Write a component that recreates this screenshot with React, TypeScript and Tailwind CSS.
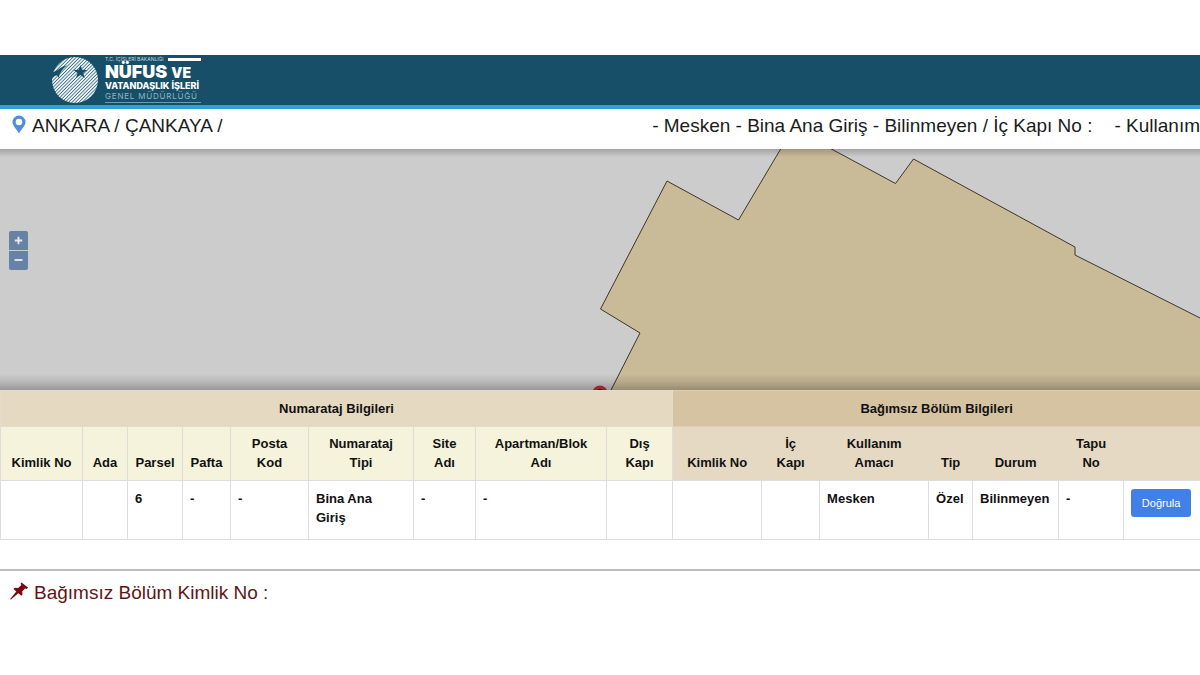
import React from 'react';

type Column = { label: string; width: string; group: 'address' | 'unit' };

const columns: Column[] = [
  { label: 'Kimlik No', width: 'w-[82px]', group: 'address' },
  { label: 'Ada', width: 'w-[45px]', group: 'address' },
  { label: 'Parsel', width: 'w-[55px]', group: 'address' },
  { label: 'Pafta', width: 'w-[48px]', group: 'address' },
  { label: 'Posta\nKod', width: 'w-[78px]', group: 'address' },
  { label: 'Numarataj\nTipi', width: 'w-[105px]', group: 'address' },
  { label: 'Site\nAdı', width: 'w-[62px]', group: 'address' },
  { label: 'Apartman/Blok\nAdı', width: 'w-[131px]', group: 'address' },
  { label: 'Dış\nKapı', width: 'w-[66px]', group: 'address' },
  { label: 'Kimlik No', width: 'w-[89px]', group: 'unit' },
  { label: 'İç\nKapı', width: 'w-[58px]', group: 'unit' },
  { label: 'Kullanım\nAmacı', width: 'w-[109px]', group: 'unit' },
  { label: 'Tip', width: 'w-[44px]', group: 'unit' },
  { label: 'Durum', width: 'w-[86px]', group: 'unit' },
  { label: 'Tapu\nNo', width: 'w-[65px]', group: 'unit' },
  { label: '', width: 'w-[77px]', group: 'unit' },
];

const row = ['', '', '6', '-', '-', 'Bina Ana\nGiriş', '-', '-', '', '', '', 'Mesken', 'Özel', 'Bilinmeyen', '-'];

function Logo() {
  return (
    <div className="flex items-start gap-1.5 text-white">
      <svg viewBox="0 0 48 48" className="mt-px size-12" aria-hidden="true">
        <defs>
          <pattern id="stripes" width="2.4" height="2.4" patternUnits="userSpaceOnUse" patternTransform="rotate(-45)">
            <rect width="2.4" height="1.75" fill="#eaf2f5" />
          </pattern>
        </defs>
        <circle cx="24" cy="24" r="23" fill="url(#stripes)" />
        <path d="M-1 16 2 16C7 15 10 10 16 9.500 12 12 9 16 7.500 22L6.500 19.500C4.500 19 2.500 20 1 23L-2 23Z" fill="#174f69" />
        <path d="m29.500 9 1.700 4.700 5 .2-4 3.100 1.400 4.900-4.200-2.800-4.200 2.900 1.300-4.900-4-3.100 5.100-.3Z" fill="#174f69" />
      </svg>
      <div className="flex w-24 flex-col font-['Inter',sans-serif]">
        <div className="flex h-2 items-center justify-between gap-1">
          <span className="text-[5px] leading-[8px] whitespace-nowrap text-[#c3d6de]">T.C. İÇİŞLERİ BAKANLIĞI</span>
          <span className="h-[3px] grow bg-white" />
        </div>
        <div className="flex h-[17px] items-baseline gap-1 leading-[17px] font-black whitespace-nowrap">
          <span className="text-[18px]">NÜFUS</span>
          <span className="text-[14px]">VE</span>
        </div>
        <span className="text-[9px] leading-[11px] font-extrabold whitespace-nowrap">VATANDAŞLIK İŞLERİ</span>
        <span className="border-b border-[#6d9aad] text-[8px] leading-[11px] tracking-widest whitespace-nowrap text-[#8fb6c5]">
          GENEL MÜDÜRLÜĞÜ
        </span>
      </div>
    </div>
  );
}

function MapPin() {
  return (
    <svg viewBox="0 0 14 19" className="h-[19px] w-3.5 shrink-0" aria-hidden="true">
      <path
        d="M7 .5A6.500 6.500 0 0 0 .5 7c0 4 5 8 6.500 11.500C8.500 15 13.500 11 13.500 7A6.500 6.500 0 0 0 7 .5ZM7 3.700a3.300 3.300 0 1 1 0 6.600 3.300 3.300 0 0 1 0-6.600Z"
        fill="#4f8edc"
        fillRule="evenodd"
      />
    </svg>
  );
}

function PushPin() {
  return (
    <svg viewBox="0 0 18 18" className="size-[18px] shrink-0" aria-hidden="true">
      <path
        d="M11.500.5 18 5.500 16.800 6.900 15 6.500 12.200 9.500 12.500 12.500 11.300 13.700 8.300 11.200 1 17.500.3 17.500.4 16.800 6.300 9.500 3.500 7 4.700 5.700 8.200 6 11.300 3 10.600 1.500Z"
        fill="#7a0c10"
      />
    </svg>
  );
}

function ParcelMap() {
  return (
    <section className="relative h-[241px] overflow-hidden bg-[#cccccc]" aria-label="Harita">
      <svg viewBox="0 0 1200 241" preserveAspectRatio="xMidYMid slice" className="h-full w-full" aria-hidden="true">
        <circle cx="600" cy="244" r="7.500" fill="#b5383b" />
        <circle cx="600" cy="243" r="3" fill="#64191c" />
        <path
          d="M609 245 640 184 600.500 160 667 32 738.500 71 786-9 824-4 895.500 34.500 913.500 10 1075 98V106L1210 174V260H601Z"
          fill="#cabb98"
          stroke="#3d3727"
          strokeWidth="1"
        />
      </svg>
      <div className="absolute inset-x-0 top-0 h-2 bg-linear-to-b from-black/20 to-transparent" />
      <div className="absolute inset-x-0 bottom-0 h-4 bg-linear-to-t from-black/25 via-black/10 to-transparent" />
      <div className="absolute top-[82px] left-[9px] flex flex-col gap-px">
        <button aria-label="Yakınlaştır" className="flex size-[19px] items-center justify-center rounded-t-xs bg-[#6682a6]">
          <svg viewBox="0 0 9 9" className="size-[9px]" aria-hidden="true">
            <path d="M4.500.8V8.200M.8 4.500H8.200" stroke="#e6ebf1" strokeWidth="1.800" />
          </svg>
        </button>
        <button aria-label="Uzaklaştır" className="flex size-[19px] items-center justify-center rounded-b-xs bg-[#6682a6]">
          <svg viewBox="0 0 9 9" className="size-[9px]" aria-hidden="true">
            <path d="M.5 4H8.500" stroke="#e6ebf1" strokeWidth="1.800" />
          </svg>
        </button>
      </div>
    </section>
  );
}

function UnitTable() {
  return (
    <table className="w-full table-fixed border-collapse text-[13px] leading-[19px] font-bold text-[#111]">
      <colgroup>
        {columns.map((column, index) => (
          <col key={index} className={column.width} />
        ))}
      </colgroup>
      <thead>
        <tr>
          <th colSpan={9} scope="colgroup" className="border border-[#e3dccd] bg-[#e6d9c2] p-2">
            Numarataj Bilgileri
          </th>
          <th colSpan={7} scope="colgroup" className="border border-[#dccfb6] bg-[#d6c3a1] p-2">
            Bağımsız Bölüm Bilgileri
          </th>
        </tr>
        <tr>
          {columns.map((column, index) => (
            <th
              key={index}
              scope="col"
              className={
                column.group === 'address'
                  ? 'border border-[#dddddd] bg-[#f5f3db] px-1.5 pt-[7px] pb-2 align-bottom whitespace-pre-line'
                  : 'border border-[#e3d8c6] border-b-[#dddddd] bg-[#e6d9c4] px-1.5 pt-[7px] pb-2 align-bottom whitespace-pre-line'
              }
            >
              {column.label}
            </th>
          ))}
        </tr>
      </thead>
      <tbody>
        <tr className="h-[59px]">
          {row.map((value, index) => (
            <td key={index} className="border border-[#dddddd] px-[7px] py-2 align-top whitespace-pre-line">
              {value}
            </td>
          ))}
          <td className="border border-[#dddddd] px-[7px] py-2 align-top">
            <button className="block h-7 w-[60px] rounded-[3px] bg-[#4280e8] text-center text-[11px] leading-7 font-normal text-white">
              Doğrula
            </button>
          </td>
        </tr>
      </tbody>
    </table>
  );
}

export default function App() {
  return (
    <div className="min-h-screen overflow-x-hidden bg-white pt-[55px] font-['Liberation_Sans',Arial,sans-serif] text-[#1c1c1c]">
      <header className="h-[54px] border-b-4 border-[#349fd0] bg-[#174f69] pl-[51px]">
        <Logo />
      </header>
      <div className="flex h-10 items-start justify-between overflow-hidden px-3 pt-1.5 text-[19px] leading-[22px] whitespace-nowrap">
        <div className="flex items-start gap-1.5">
          <MapPin />
          <span>ANKARA / ÇANKAYA /</span>
        </div>
        <div className="-mr-3 flex gap-[22px]">
          <span>- Mesken - Bina Ana Giriş - Bilinmeyen / İç Kapı No :</span>
          <span>- Kullanım</span>
        </div>
      </div>
      <ParcelMap />
      <UnitTable />
      <footer className="mt-[29px] border-t-2 border-[#bdbdbd] px-[10px] pt-[11px] text-[19px] leading-[22px] text-[#5f1616]">
        <div className="flex items-start gap-1.5">
          <PushPin />
          <span>Bağımsız Bölüm Kimlik No :</span>
        </div>
      </footer>
    </div>
  );
}
